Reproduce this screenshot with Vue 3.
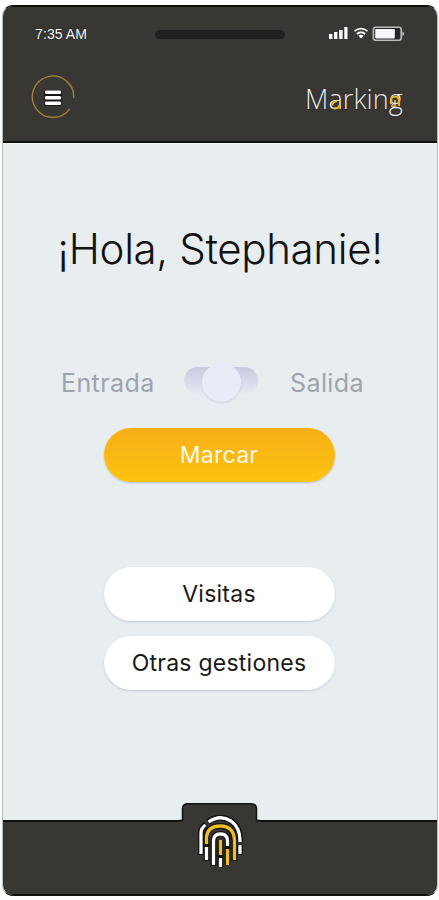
<script setup>
import { ref } from 'vue'

const actions = ref(['Visitas', 'Otras gestiones'])
</script>

<template>
  <main class="phone">
    <header class="top">
      <div class="status">
        <span class="time">7:35 AM</span>
        <span class="speaker"></span>
        <svg class="signals" width="80" height="20" viewBox="0 0 80 20">
          <g fill="#fff">
            <rect x="2" y="12" width="3.4" height="5" />
            <rect x="7" y="10" width="3.4" height="7" />
            <rect x="12.2" y="8" width="3.4" height="9" />
            <rect x="17.3" y="5" width="3.2" height="12" />
          </g>
          <g fill="none" stroke="#f4f4f4" stroke-width="1.7">
            <path d="M27.5 9.2Q34 4.2 40.5 9.2" />
            <path d="M29.8 12Q34 8.5 38.2 12" />
          </g>
          <path d="M31.4 13.8Q34 11.8 36.6 13.8L34 16.6Z" fill="#fff" />
          <rect x="46.4" y="5.2" width="27.8" height="13" rx="2.2" fill="#25252a" stroke="#bdbdbd" stroke-width="1.6" />
          <rect x="48.2" y="7" width="19.6" height="9.4" rx="1" fill="#f8f5fb" />
          <path d="M75.5 9.2q3 2.5 0 5z" fill="#ddd" />
        </svg>
      </div>
      <div class="nav">
        <button class="menu" aria-label="Menú">
          <svg width="46" height="46" viewBox="0 0 46 46">
            <path d="M43.7 23A20.7 20.7 0 1 0 39.8 33.9" fill="none" stroke="#a98732" stroke-width="1.3" />
            <rect x="14.3" y="15" width="17.4" height="16" rx="2" fill="#171713" />
            <g fill="#fff">
              <rect x="15" y="15.6" width="16" height="3.4" rx="1.2" />
              <rect x="15" y="21.1" width="16" height="3.4" rx="1.2" />
              <rect x="15" y="26.6" width="16" height="3.4" rx="1.2" />
            </g>
          </svg>
        </button>
        <div class="brand">
          <span class="word">Marking</span>
          <svg class="accents" width="100" height="34" viewBox="0 0 100 34" fill="none">
            <path d="M26 22.5q.8-4 5-4.2M27.5 25.2q5 1 6.5-3" stroke="#efb520" stroke-width="2" />
            <path d="M85 21v-3q0-4.5 4-4.500t4 4.500v5" stroke="#efb520" stroke-width="2.2" />
            <path d="M89 17v6" stroke="#e8e3d5" stroke-width="1.3" />
            <path d="M86 23.300h4.500" stroke="#d99b20" stroke-width="1.600" />
          </svg>
        </div>
      </div>
    </header>

    <section class="content">
      <h1 class="greeting">¡Hola, Stephanie!</h1>
      <div class="mode">
        <span class="entry">Entrada</span>
        <span class="toggle"><span class="knob"></span></span>
        <span class="exit">Salida</span>
      </div>
      <button class="pill primary">Marcar</button>
      <div class="actions">
        <button v-for="name in actions" :key="name" class="pill">{{ name }}</button>
      </div>
    </section>

    <footer class="bottom">
      <svg class="tabshape" width="81" height="20" viewBox="0 0 81 20">
        <path d="M0 17.5H3.5V6Q3.5 .8 9 .8H72Q77.5 .8 77.5 6V17.5H81V20H0Z" fill="#383733" />
        <path d="M0 17.5H3.5V6Q3.5 .8 9 .8H72Q77.5 .8 77.5 6V17.5H81" fill="none" stroke="#11120e" stroke-width="1.5" />
      </svg>
      <svg class="finger" width="50" height="54" viewBox="0 0 50 54" fill="none">
        <g stroke="#12130f" stroke-width="6">
          <path d="M6 40V18q0-5 5-8.5M13 7Q25 -1 36 6Q46 13 45 27M45 30v10" />
          <path d="M11.500 46V20Q13.500 11 25.500 11T39.500 25V46M18.500 51V26q0-7 7-7t7 7V50M25.500 25V52" />
        </g>
        <g stroke-width="3.3">
          <path d="M6 39V18q0-5 4.500-8" stroke="#fff" />
          <path d="M13.500 7Q25 -1 36 6Q45.500 13 45 27" stroke="#fff" />
          <path d="M45 30v9" stroke="#fff" />
          <path d="M11.500 29V22Q12.500 11 25.500 11T39.500 25V45" stroke="#edbd27" />
          <path d="M11.500 32v13" stroke="#fff" />
          <path d="M18.500 50V26q0-7 7-7t7 7V31" stroke="#fff" />
          <path d="M25.500 25V40M32.500 34V50" stroke="#edbd27" />
          <path d="M25.500 43v9" stroke="#fff" />
        </g>
      </svg>
    </footer>
  </main>
</template>

<style>
body {
  margin: 0;
  background: #fdfdfd;
}
</style>

<style scoped>
.phone {
  box-sizing: border-box;
  width: 436px;
  height: 891px;
  margin: 5px 0 0 2px;
  border: 1px solid #b7babb;
  border-top-color: #10110e;
  border-bottom-color: #10110e;
  border-radius: 11px;
  overflow: hidden;
  display: flex;
  flex-direction: column;
  background: #e8edf0;
  font-family: Inter, "Liberation Sans", sans-serif;
}

button {
  border: 0;
  padding: 0;
  font-family: inherit;
}

.top {
  box-sizing: border-box;
  height: 137px;
  flex: none;
  background: #383733;
  border-top: 1px solid #11120e;
  border-bottom: 2px solid #11120e;
  box-shadow: 0 1px 0 #f3f7f8;
}

.status {
  display: flex;
  height: 54px;
  align-items: center;
}

.time {
  width: 120px;
  padding-left: 32px;
  font: 14px/20px "Liberation Sans", sans-serif;
  letter-spacing: 0.1px;
  color: #fff;
  text-shadow: 0 0 1px #000;
}

.speaker {
  width: 130px;
  height: 9px;
  border-radius: 5px;
  background: #211f20;
}

.signals {
  margin: 0 0 5px 42px;
}

.nav {
  display: flex;
  justify-content: space-between;
  padding: 14px 29px 0 27px;
}

.menu {
  width: 46px;
  height: 46px;
  background: none;
}

.brand {
  position: relative;
  width: 103px;
  height: 46px;
}

.word {
  display: block;
  padding-top: 6px;
  font: 300 27px/36px "Open Sans", sans-serif;
  letter-spacing: 0.1px;
  color: #f2f2f2;
  white-space: nowrap;
  text-shadow: 0 0 1px #000;
}

.accents {
  position: absolute;
  left: 1px;
  top: 8px;
}

.content {
  flex: 1;
  display: flex;
  flex-direction: column;
  align-items: center;
}

.greeting {
  margin: 78px 0 0;
  font-size: 42px;
  line-height: 56px;
  font-weight: 300;
  letter-spacing: -0.35px;
  color: #111;
  white-space: nowrap;
}

.mode {
  display: flex;
  align-self: stretch;
  height: 60px;
  margin-top: 76px;
  padding-left: 58px;
  align-items: center;
  color: #9ea4ad;
  font-size: 25px;
  letter-spacing: 0.4px;
  line-height: 34px;
}

.entry {
  width: 122px;
}

.toggle {
  display: flex;
  justify-content: center;
  width: 74px;
  height: 27px;
  margin: -6px 32px 0 1px;
  border-radius: 14px;
  background: linear-gradient(#c6cbe0, #e6eaf2);
}

.knob {
  flex: none;
  width: 39px;
  height: 39px;
  margin-top: -4px;
  border-radius: 50%;
  background: #e9ecf7;
  box-shadow: 0 1px 2px #cbd0dc;
}

.pill {
  width: 231px;
  height: 54px;
  margin-right: 2px;
  border-radius: 27px;
  background: #fff;
  color: #191919;
  font-size: 23px;
  letter-spacing: 0.25px;
  line-height: 52px;
  box-shadow: 0 1px 2px #c0c9d8;
}

.primary {
  margin-top: 15px;
  color: #fff9e8;
  background: linear-gradient(#f7ae17, #fdc30f);
  box-shadow: 0 1px 2px #b9bec2;
}

.actions {
  display: flex;
  flex-direction: column;
  gap: 15px;
  margin-top: 85px;
}

.bottom {
  position: relative;
  box-sizing: border-box;
  height: 75px;
  flex: none;
  border-top: 2px solid #11120e;
  border-bottom: 1px solid #11120e;
  background: #383733;
}

.tabshape {
  position: absolute;
  left: 176px;
  top: -19px;
}

.finger {
  position: absolute;
  left: 192px;
  top: -7px;
}
</style>
